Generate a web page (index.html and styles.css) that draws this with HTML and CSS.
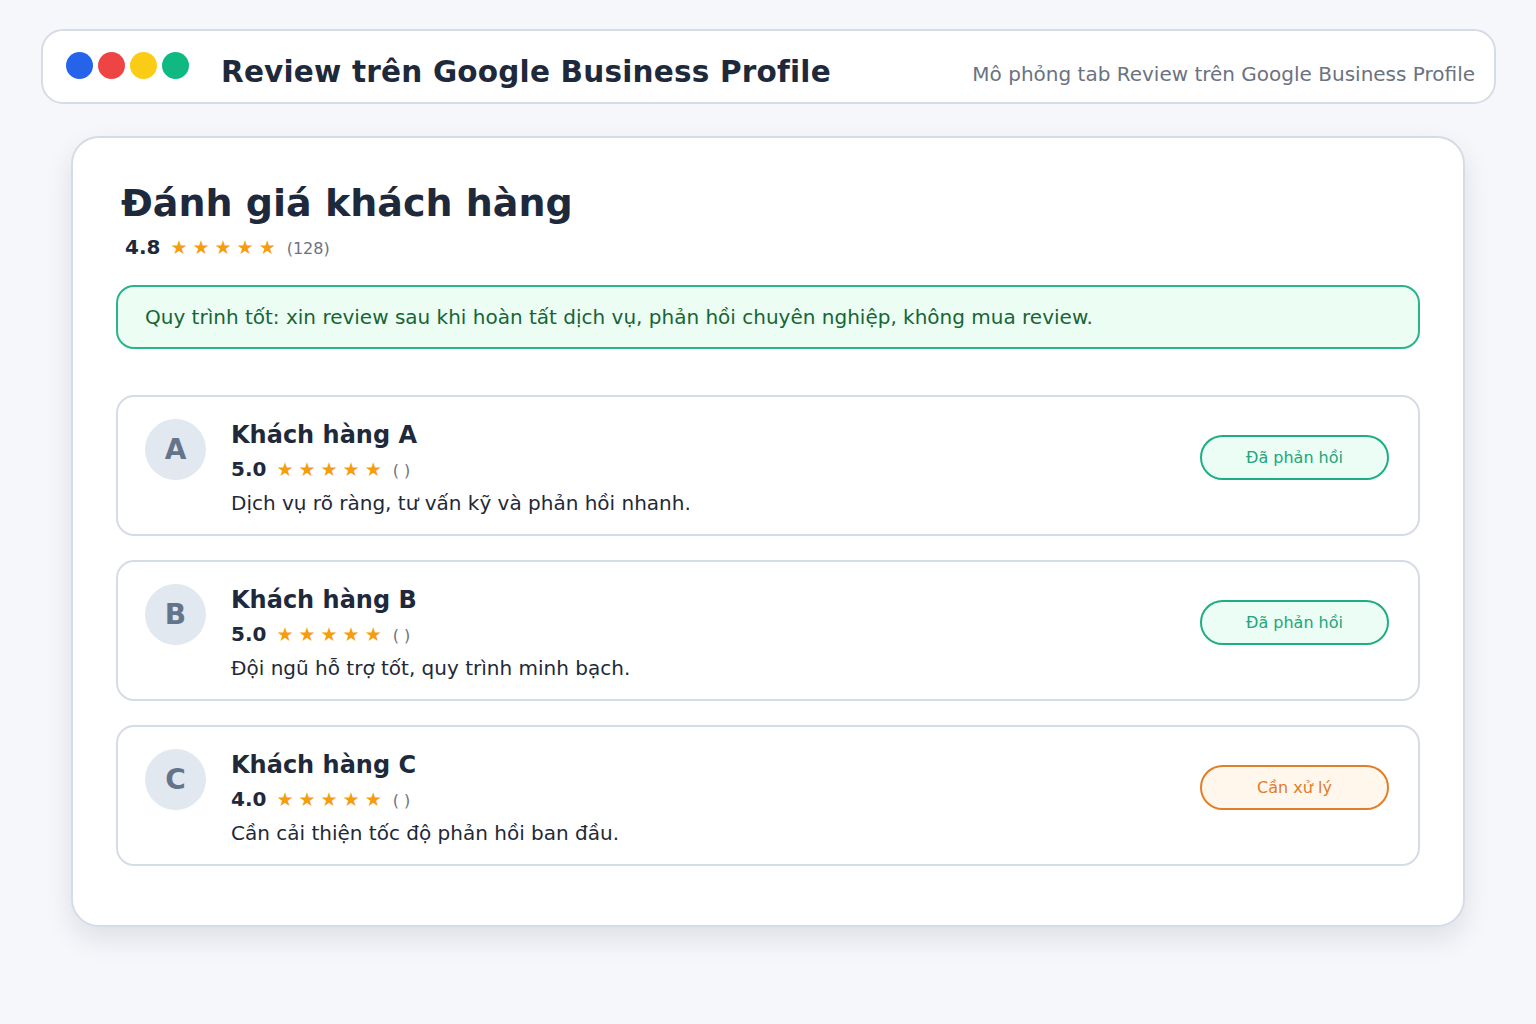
FILE: index.html
```html
<!DOCTYPE html>
<html lang="vi">
<head>
<meta charset="utf-8">
<title>Review trên Google Business Profile</title>
<link rel="stylesheet" href="styles.css">
</head>
<body>
<div class="page">
  <header class="topbar">
    <div class="dots">
      <span class="dot blue"></span>
      <span class="dot red"></span>
      <span class="dot yellow"></span>
      <span class="dot green"></span>
    </div>
    <h1 class="top-title">Review trên Google Business Profile</h1>
    <div class="top-sub">Mô phỏng tab Review trên Google Business Profile</div>
  </header>

  <main class="card">
    <h2 class="heading">Đánh giá khách hàng</h2>
    <div class="rating-row summary">
      <span class="score">4.8</span>
      <span class="stars"><span>★</span><span>★</span><span>★</span><span>★</span><span>★</span></span>
      <span class="count">(128)</span>
    </div>

    <div class="notice">Quy trình tốt: xin review sau khi hoàn tất dịch vụ, phản hồi chuyên nghiệp, không mua review.</div>

    <div class="reviews">
      <div class="review">
        <div class="avatar">A</div>
        <div class="review-body">
          <div class="name">Khách hàng A</div>
          <div class="rating-row">
            <span class="score">5.0</span>
            <span class="stars"><span>★</span><span>★</span><span>★</span><span>★</span><span>★</span></span>
            <span class="count">( )</span>
          </div>
          <div class="comment">Dịch vụ rõ ràng, tư vấn kỹ và phản hồi nhanh.</div>
        </div>
        <div class="badge ok">Đã phản hồi</div>
      </div>

      <div class="review">
        <div class="avatar">B</div>
        <div class="review-body">
          <div class="name">Khách hàng B</div>
          <div class="rating-row">
            <span class="score">5.0</span>
            <span class="stars"><span>★</span><span>★</span><span>★</span><span>★</span><span>★</span></span>
            <span class="count">( )</span>
          </div>
          <div class="comment">Đội ngũ hỗ trợ tốt, quy trình minh bạch.</div>
        </div>
        <div class="badge ok">Đã phản hồi</div>
      </div>

      <div class="review">
        <div class="avatar">C</div>
        <div class="review-body">
          <div class="name">Khách hàng C</div>
          <div class="rating-row">
            <span class="score">4.0</span>
            <span class="stars"><span>★</span><span>★</span><span>★</span><span>★</span><span>★</span></span>
            <span class="count">( )</span>
          </div>
          <div class="comment">Cần cải thiện tốc độ phản hồi ban đầu.</div>
        </div>
        <div class="badge warn">Cần xử lý</div>
      </div>
    </div>
  </main>
</div>
</body>
</html>
```

FILE: styles.css
```css
* { box-sizing: border-box; }

html, body {
  margin: 0;
  padding: 0;
  background: #f6f7fb;
  font-family: "DejaVu Sans", "Noto Sans", sans-serif;
  color: #1f2937;
}

.page {
  width: 1536px;
  height: 1024px;
  padding: 29px 0 0 41px;
}

.topbar {
  width: 1455px;
  height: 75px;
  background: #ffffff;
  border: 2px solid #d6dce6;
  border-radius: 22px;
  display: flex;
  align-items: flex-start;
  padding: 0 19px 0 23px;
}

.dots {
  display: flex;
  gap: 5px;
  margin-top: 21px;
}

.dot {
  width: 27px;
  height: 27px;
  border-radius: 50%;
  display: block;
}
.dot.blue { background: #2563eb; }
.dot.red { background: #ef4444; }
.dot.yellow { background: #facc15; }
.dot.green { background: #10b981; }

.top-title {
  margin: 24px 0 0 32px;
  font-size: 29.5px;
  line-height: 34px;
  font-weight: 700;
  color: #1e293b;
  letter-spacing: 0.2px;
}

.top-sub {
  margin: 31px 0 0 auto;
  font-size: 20px;
  line-height: 24px;
  color: #6b7280;
}

.card {
  width: 1394px;
  margin: 32px 0 0 30px;
  background: #ffffff;
  border: 2px solid #d6dce6;
  border-radius: 28px;
  box-shadow: 0 12px 28px rgba(15, 23, 42, 0.10);
  padding: 41px 43px 59px 43px;
}

.heading {
  margin: 0 0 0 5px;
  font-size: 38px;
  line-height: 48px;
  font-weight: 700;
  color: #1e293b;
}

.rating-row {
  display: flex;
  align-items: baseline;
  height: 24px;
  line-height: 24px;
}

.summary {
  margin: 8px 0 0 9px;
}

.score {
  font-size: 20px;
  font-weight: 700;
  color: #1e293b;
}

.stars {
  display: flex;
  gap: 5px;
  margin-left: 10px;
  color: #f59e0b;
  font-size: 19px;
}

.count {
  margin-left: 11px;
  font-size: 16px;
  color: #6b7280;
}

.notice {
  margin-top: 26px;
  height: 64px;
  border: 2px solid #2bb38b;
  border-radius: 18px;
  background: #ecfdf4;
  color: #166534;
  font-size: 20px;
  display: flex;
  align-items: center;
  padding-left: 27px;
}

.reviews {
  margin-top: 46px;
  display: flex;
  flex-direction: column;
  gap: 24px;
}

.review {
  height: 141px;
  border: 2px solid #d6dce6;
  border-radius: 18px;
  display: flex;
  align-items: flex-start;
  padding: 22px 29px 0 27px;
}

.avatar {
  width: 61px;
  height: 61px;
  border-radius: 50%;
  background: #e2e8f0;
  color: #64748b;
  font-size: 28px;
  font-weight: 700;
  display: flex;
  align-items: center;
  justify-content: center;
  flex-shrink: 0;
}

.review-body {
  margin-left: 25px;
  margin-top: 2px;
  flex: 1;
}

.name {
  font-size: 24px;
  line-height: 28px;
  font-weight: 700;
  color: #1e293b;
}

.review .rating-row {
  margin-top: 8px;
}

.comment {
  margin-top: 10px;
  font-size: 20px;
  line-height: 24px;
  color: #1f2937;
}

.badge {
  margin-top: 16px;
  width: 189px;
  height: 45px;
  border-radius: 23px;
  border: 2px solid;
  display: flex;
  align-items: center;
  justify-content: center;
  font-size: 16px;
}

.badge.ok {
  border-color: #1fae84;
  background: #ecfdf5;
  color: #22a67a;
}

.badge.warn {
  border-color: #e07f2a;
  background: #fff7ec;
  color: #e07b2a;
}
```
